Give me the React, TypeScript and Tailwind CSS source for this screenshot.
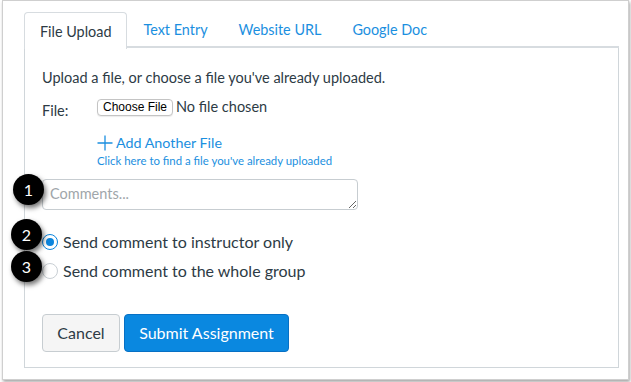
import { useState } from 'react';

const tabs = ['File Upload', 'Text Entry', 'Website URL', 'Google Doc'];

function Badge({ n, className }: { n: number; className: string }) {
  return (
    <div
      className={`absolute flex h-[31px] w-[31px] items-center justify-center rounded-full bg-black text-[16px] text-white shadow-[2px_3px_5px_rgba(0,0,0,0.55)] ${className}`}
    >
      {n}
    </div>
  );
}

function Radio({ checked, label, onClick }: { checked: boolean; label: string; onClick: () => void }) {
  return (
    <label className="flex h-[29px] cursor-pointer items-center" onClick={onClick}>
      <span
        className={`flex h-[16px] w-[16px] items-center justify-center rounded-full border bg-white ${
          checked ? 'border-[#0c85dd]' : 'border-[#c9cfd4]'
        }`}
      >
        {checked && <span className="h-[8px] w-[8px] rounded-full bg-[#0c85dd]" />}
      </span>
      <span className="ml-[5px] text-[16px] text-[#2d3b45]">{label}</span>
    </label>
  );
}

export default function App() {
  const [active, setActive] = useState(0);
  const [target, setTarget] = useState<'instructor' | 'group'>('instructor');

  return (
    <div className="h-[382px] w-[631px] bg-white pl-[2px] font-['Lato','Open_Sans',sans-serif]">
      <div className="relative h-[380px] w-[627px] border border-[#cfcfcf] bg-white pl-[21px] pt-[11px] shadow-[1px_2px_3px_rgba(0,0,0,0.35)]">
        {/* tabs */}
        <div className="flex h-[36px] w-[595px] border-b-2 border-[#d7dce0]">
          {tabs.map((t, i) =>
            i === active ? (
              <button
                key={t}
                onClick={() => setActive(i)}
                className="-mb-[2px] h-[37px] rounded-t-[4px] border border-b-0 border-[#d7dce0] bg-white px-[15px] pt-[1px] text-[14.4px] text-[#2d3b45]"
              >
                {t}
              </button>
            ) : (
              <button
                key={t}
                onClick={() => setActive(i)}
                className="ml-[1px] h-[35px] px-[15px] pt-[1px] text-[14.4px] text-[#1b8fe0]"
              >
                {t}
              </button>
            )
          )}
        </div>

        {/* panel */}
        <div className="h-[320px] w-[595px] border-x border-b border-[#d0d6da] pl-[17px] pt-[20px]">
          <p className="text-[14.5px] leading-[20px] text-[#2d3b45]">
            Upload a file, or choose a file you've already uploaded.
          </p>
          <div className="mt-[5px] flex">
            <span className="mt-[8px] w-[55px] text-[14.5px] leading-[20px] text-[#2d3b45]">File:</span>
            <div className="flex items-center">
              <button className="h-[17px] w-[76px] rounded-[4px] border border-[#c4c4c4] bg-white font-['Liberation_Sans',Arial,sans-serif] text-[12px] leading-[15px] text-black shadow-[0_1px_1px_rgba(0,0,0,0.08)]">
                Choose File
              </button>
              <span className="ml-[3px] text-[14.5px] leading-[20px] text-[#2d3b45]">No file chosen</span>
            </div>
          </div>
          <div className="ml-[55px] mt-[12px] flex items-center text-[#1b8fe0]">
            <svg width="16" height="16" viewBox="0 0 16 16" className="shrink-0">
              <path d="M8 0.5V15.5M0.5 8H15.5" stroke="#1b8fe0" strokeWidth="1.3" fill="none" />
            </svg>
            <span className="ml-[3px] text-[14.3px] leading-[20px]">Add Another File</span>
          </div>
          <div className="ml-[55px] mt-[1px] text-[11.4px] leading-[14px] text-[#1b8fe0]">
            Click here to find a file you've already uploaded
          </div>

          <textarea
            placeholder="Comments..."
            className="mt-[11px] block h-[31px] w-[316px] resize rounded-[4px] border border-[#c7cdd1] px-[7px] py-[4px] text-[14.5px] leading-[20px] text-[#2d3b45] outline-none placeholder:text-[#a0a6aa]"
          />

          <div className="mt-[17px]">
            <Radio
              checked={target === 'instructor'}
              label="Send comment to instructor only"
              onClick={() => setTarget('instructor')}
            />
            <Radio
              checked={target === 'group'}
              label="Send comment to the whole group"
              onClick={() => setTarget('group')}
            />
          </div>

          <div className="mt-[29px] flex gap-[4px]">
            <button className="h-[38px] w-[78px] rounded-[4px] border border-[#c7cdd1] bg-[#f5f5f5] text-[16px] text-[#2d3b45]">
              Cancel
            </button>
            <button className="h-[38px] w-[165px] rounded-[4px] border border-[#0770c4] bg-[#0a88e0] text-[16px] text-white">
              Submit Assignment
            </button>
          </div>
        </div>

        <Badge n={1} className="left-[10px] top-[173px]" />
        <Badge n={2} className="left-[8px] top-[218px]" />
        <Badge n={3} className="left-[8px] top-[250px]" />
      </div>
    </div>
  );
}
